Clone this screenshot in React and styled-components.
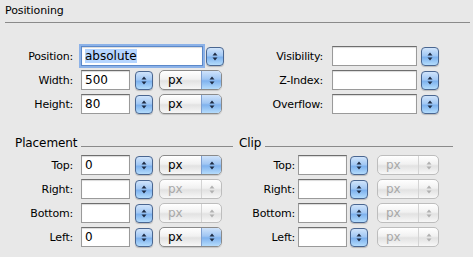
import React from "react";
import styled, { createGlobalStyle, css } from "styled-components";

const GlobalStyle = createGlobalStyle`
  html, body {
    margin: 0;
    padding: 0;
    background: #e8e8e8;
  }
  body {
    font-family: "DejaVu Sans", "Liberation Sans", sans-serif;
    font-size: 11px;
    color: #000;
  }
`;

const Panel = styled.div`
  width: 473px;
  height: 257px;
  box-sizing: border-box;
  background: #e8e8e8;
  overflow: hidden;
`;

const Header = styled.div`
  margin: 0 3px 0 5px;
  padding-top: 4px;
  height: 18px;
  border-bottom: 1px solid #8a8a8a;
  font-size: 11px;
  letter-spacing: -0.1px;
`;

const TopBlock = styled.div`
  display: flex;
  margin-top: 23px;
`;

const Column = styled.div`
  display: flex;
  flex-direction: column;
  gap: 4px;
  width: ${p => p.$width}px;
`;

const Row = styled.div`
  display: flex;
  align-items: center;
  height: 20px;
`;

const Label = styled.label`
  width: ${p => p.$width}px;
  margin-right: ${p => p.$gap}px;
  text-align: right;
  white-space: nowrap;
  font-size: 11px;
  letter-spacing: -0.2px;
`;

const Field = styled.div`
  box-sizing: border-box;
  width: ${p => p.$width}px;
  height: 20px;
  margin-right: ${p => p.$gap}px;
  background: #fff;
  border: 1px solid #9a9a9a;
  border-top-color: #6e6e6e;
  box-shadow: inset 0 1px 1px rgba(0, 0, 0, 0.15);
  padding: 1px 3px 0;
  font-size: 12px;
  line-height: 16px;
  ${p =>
    p.$focused &&
    css`
      border-color: #5b88c9;
      box-shadow: 0 0 0 2px #8cb2e8, inset 0 1px 1px rgba(0, 0, 0, 0.15);
    `}
`;

const Selected = styled.span`
  background: #b5d5ff;
`;

const Stepper = styled.div`
  box-sizing: border-box;
  width: 18px;
  height: 19px;
  margin-right: ${p => p.$gap || 0}px;
  border: 1px solid #4a6690;
  border-radius: 4px;
  background: linear-gradient(#d0e4fb 0%, #a2c8f4 45%, #7eb2ee 55%, #b4dcfc 100%);
  box-shadow: 0 1px 1px rgba(0, 0, 0, 0.2);
  display: flex;
  align-items: center;
  justify-content: center;
`;

const Select = styled.div`
  box-sizing: border-box;
  width: ${p => p.$width}px;
  height: 20px;
  display: flex;
  align-items: stretch;
  border: 1px solid ${p => (p.$disabled ? "#bdbdbd" : "#8a8a8a")};
  border-radius: 5px;
  background: linear-gradient(#ffffff 0%, #f1f1f1 45%, #e2e2e2 55%, #f7f7f7 100%);
  overflow: hidden;
  color: ${p => (p.$disabled ? "#a8a8a8" : "#000")};
  box-shadow: ${p => (p.$disabled ? "none" : "0 1px 1px rgba(0,0,0,0.15)")};
`;

const SelectText = styled.span`
  flex: 1;
  padding-left: 8px;
  font-size: 12px;
  line-height: 18px;
`;

const SelectArrows = styled.div`
  width: 19px;
  display: flex;
  align-items: center;
  justify-content: center;
  border-left: 1px solid ${p => (p.$disabled ? "#d4d4d4" : "#7f9fcf")};
  background: ${p =>
    p.$disabled
      ? "transparent"
      : "linear-gradient(#cfe3fb 0%, #a0c6f3 45%, #7fb2ee 55%, #b5dcfc 100%)"};
`;

const BottomBlock = styled.div`
  display: flex;
  margin-top: 22px;
`;

const Group = styled.div`
  display: flex;
  flex-direction: column;
  gap: 4px;
  width: ${p => p.$width}px;
  margin-left: ${p => p.$offset}px;
`;

const GroupTitle = styled.div`
  display: flex;
  align-items: center;
  height: 15px;
  font-size: 12px;
  letter-spacing: -0.1px;
  line-height: 15px;

  &::after {
    content: "";
    flex: 1;
    margin-left: 4px;
    margin-top: 6px;
    border-top: 1px solid #8a8a8a;
  }
`;

const GroupRows = styled.div`
  display: flex;
  flex-direction: column;
  gap: 4px;
`;

const Arrows = ({ color = "#1e2c44" }) => (
  <svg width="6" height="9" viewBox="0 0 6 9">
    <path d="M3 0.5 L5.5 3.5 L0.5 3.5 Z" fill={color} />
    <path d="M3 8.5 L5.5 5.5 L0.5 5.5 Z" fill={color} />
  </svg>
);

const StepButton = ({ gap }) => (
  <Stepper $gap={gap}>
    <Arrows />
  </Stepper>
);

const UnitSelect = ({ width = 63, disabled }) => (
  <Select $width={width} $disabled={disabled}>
    <SelectText>px</SelectText>
    <SelectArrows $disabled={disabled}>
      <Arrows color={disabled ? "#b0b0b0" : "#1e2c44"} />
    </SelectArrows>
  </Select>
);

const placement = [
  { label: "Top:", value: "0" },
  { label: "Right:", value: "", disabled: true },
  { label: "Bottom:", value: "", disabled: true },
  { label: "Left:", value: "0" },
];

const clip = ["Top:", "Right:", "Bottom:", "Left:"];

export default function App() {
  return (
    <Panel>
      <GlobalStyle />
      <Header>Positioning</Header>

      <TopBlock>
        <Column $width={240}>
          <Row>
            <Label $width={73} $gap={8}>Position:</Label>
            <Field $width={122} $gap={3} $focused>
              <Selected>absolute</Selected>
            </Field>
            <StepButton />
          </Row>
          <Row>
            <Label $width={73} $gap={8}>Width:</Label>
            <Field $width={49} $gap={5}>500</Field>
            <StepButton gap={6} />
            <UnitSelect />
          </Row>
          <Row>
            <Label $width={73} $gap={8}>Height:</Label>
            <Field $width={49} $gap={5}>80</Field>
            <StepButton gap={6} />
            <UnitSelect />
          </Row>
        </Column>
        <Column $width={220}>
          <Row>
            <Label $width={83} $gap={9}>Visibility:</Label>
            <Field $width={85} $gap={4} />
            <StepButton />
          </Row>
          <Row>
            <Label $width={83} $gap={9}>Z-Index:</Label>
            <Field $width={85} $gap={4} />
            <StepButton />
          </Row>
          <Row>
            <Label $width={83} $gap={9}>Overflow:</Label>
            <Field $width={85} $gap={4} />
            <StepButton />
          </Row>
        </Column>
      </TopBlock>

      <BottomBlock>
        <Group $width={218} $offset={15}>
          <GroupTitle>Placement</GroupTitle>
          <GroupRows>
            {placement.map(item => (
              <Row key={item.label}>
                <Label $width={58} $gap={8}>{item.label}</Label>
                <Field $width={49} $gap={5}>{item.value}</Field>
                <StepButton gap={6} />
                <UnitSelect disabled={item.disabled} />
              </Row>
            ))}
          </GroupRows>
        </Group>
        <Group $width={214} $offset={6}>
          <GroupTitle>Clip</GroupTitle>
          <GroupRows>
            {clip.map(label => (
              <Row key={label}>
                <Label $width={56} $gap={3}>{label}</Label>
                <Field $width={49} $gap={3} />
                <StepButton gap={9} />
                <UnitSelect width={62} disabled />
              </Row>
            ))}
          </GroupRows>
        </Group>
      </BottomBlock>
    </Panel>
  );
}
